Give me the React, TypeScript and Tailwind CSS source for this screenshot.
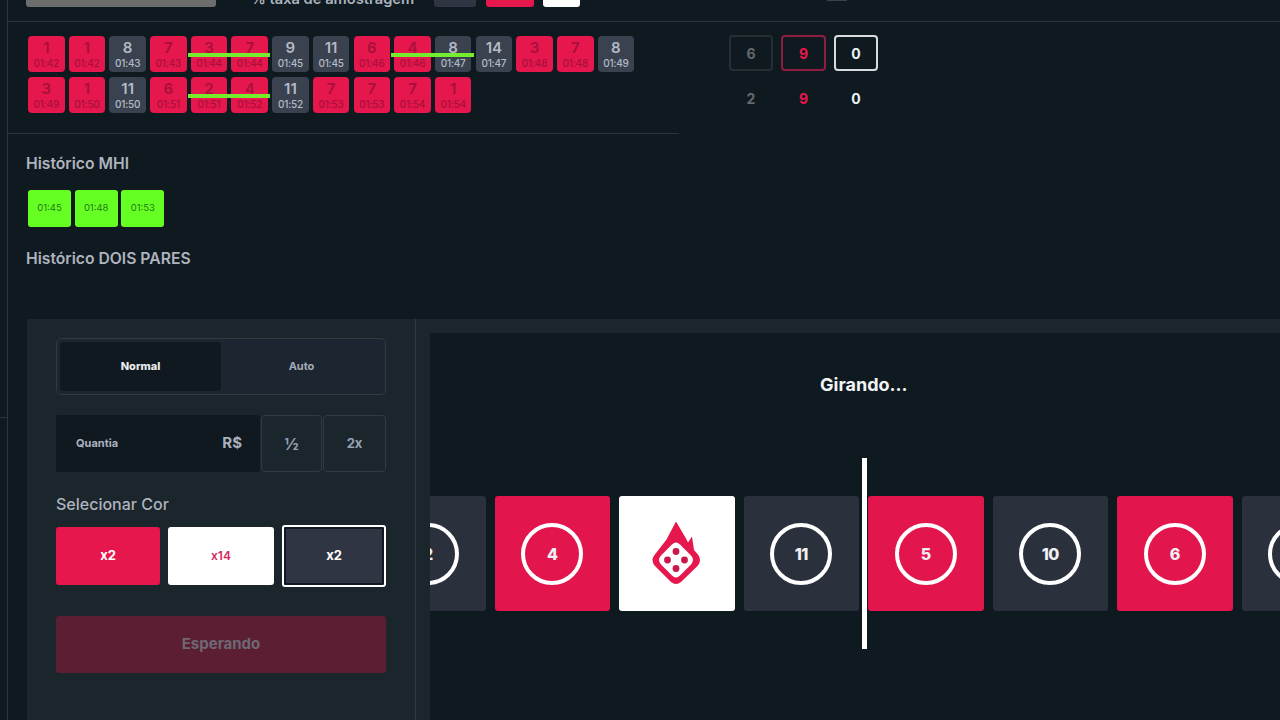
const font = "font-['Inter','Liberation_Sans',sans-serif]";

type Tile = { n: number; time: string; line?: 'start' | 'end' };

const rowOne: Tile[] = [
    { n: 1, time: '01:42' },
    { n: 1, time: '01:42' },
    { n: 8, time: '01:43' },
    { n: 7, time: '01:43' },
    { n: 3, time: '01:44', line: 'start' },
    { n: 7, time: '01:44', line: 'end' },
    { n: 9, time: '01:45' },
    { n: 11, time: '01:45' },
    { n: 6, time: '01:46' },
    { n: 4, time: '01:46', line: 'start' },
    { n: 8, time: '01:47', line: 'end' },
    { n: 14, time: '01:47' },
    { n: 3, time: '01:48' },
    { n: 7, time: '01:48' },
    { n: 8, time: '01:49' },
];

const rowTwo: Tile[] = [
    { n: 3, time: '01:49' },
    { n: 1, time: '01:50' },
    { n: 11, time: '01:50' },
    { n: 6, time: '01:51' },
    { n: 2, time: '01:51', line: 'start' },
    { n: 4, time: '01:52', line: 'end' },
    { n: 11, time: '01:52' },
    { n: 7, time: '01:53' },
    { n: 7, time: '01:53' },
    { n: 7, time: '01:54' },
    { n: 1, time: '01:54' },
];

const HistoryTile = ({ tile }: { tile: Tile }) => {
    const red = tile.n <= 7;
    return (
        <div
            className={`relative flex h-[36px] w-[36.6px] shrink-0 flex-col items-center rounded-[4px] pt-[4px] ${
                red ? 'bg-[#e5174c] text-[#a90f3c]' : 'bg-[#3a424f] text-[#b4bac6]'
            }`}
        >
            <span className="text-[15px] leading-[16px] font-semibold">{tile.n}</span>
            <span className="mt-[1px] text-[10px] leading-[12px] font-medium tracking-[-0.2px]">{tile.time}</span>
            {tile.line && (
                <div
                    className={`absolute top-[17px] -left-[3px] h-[4px] bg-[#74ee2c] ${
                        tile.line === 'start' ? 'w-[43px]' : 'w-[42px]'
                    }`}
                />
            )}
        </div>
    );
};

const DiceLogo = () => (
    <svg className="h-[115px] w-[115px]" viewBox="0 0 115 115">
        <path
            d="M57 25.5L67 42.5L69 46.5L73 40.5L75 54L79 58.5Q83 64 79 69.5L62 86Q57 90 52 86L35.5 69.5Q31.5 64 35.5 59L47.5 43.5Z"
            fill="#e5174c"
        />
        <path
            d="M53 48.5Q57 44.5 61 48.5L72 59.5Q76 64 72 68.5L61 79.5Q57 83.5 53 79.5L42 68.5Q38 64 42 59.5Z"
            fill="#ffffff"
        />
        <circle cx="57" cy="55.5" r="3.4" fill="#c8174b" />
        <circle cx="48.5" cy="64" r="3.4" fill="#c8174b" />
        <circle cx="65.5" cy="64" r="3.4" fill="#c8174b" />
        <circle cx="57" cy="72.5" r="3.4" fill="#c8174b" />
    </svg>
);

const SpinTile = ({ n, red, className = '' }: { n: number; red?: boolean; className?: string }) => (
    <div
        className={`flex h-[115px] w-[115.5px] shrink-0 items-center justify-center rounded-[3px] ${
            red ? 'bg-[#e2154d]' : 'bg-[#2a303c]'
        } ${className}`}
    >
        <div className="flex h-[62px] w-[62px] items-center justify-center rounded-full border-[4px] border-white text-[16px] font-extrabold tracking-[-0.5px] text-[#eef0f3]">
            {n}
        </div>
    </div>
);

const TopBar = () => (
    <div className="h-[22px] border-b border-[#2b353c]">
        <div className="flex h-[7px] items-end overflow-hidden">
            <div className="ml-[18px] h-[7px] w-[190px] rounded-b-[3px] bg-[#6d6d6d]" />
            <div className="ml-[35px] w-[183px] text-[14.7px] leading-[16px] font-semibold whitespace-nowrap text-[#aab2bd]">
                % taxa de amostragem
            </div>
            <div className="h-[7px] w-[42px] rounded-b-[3px] bg-[#2f3542]" />
            <div className="ml-[10px] h-[7px] w-[48px] rounded-b-[3px] bg-[#e5174c]" />
            <div className="ml-[9px] h-[7px] w-[37px] rounded-b-[3px] bg-white" />
            <div className="ml-[247px] h-[1px] w-[20px] self-start bg-[#3a434a]" />
        </div>
    </div>
);

const Counters = () => (
    <div className="ml-[50px] pt-[13px]">
        <div className="flex gap-[8px]">
            <div className="flex h-[36px] w-[44px] items-center justify-center rounded-[4px] border-2 border-[#262e34] text-[14px] font-bold text-[#66696c]">
                6
            </div>
            <div className="flex h-[36px] w-[45px] items-center justify-center rounded-[4px] border-2 border-[#8f1d40] text-[14px] font-bold text-[#e5174c]">
                9
            </div>
            <div className="flex h-[36px] w-[44px] items-center justify-center rounded-[4px] border-2 border-[#d8dcdf] text-[14px] font-bold text-[#eef1f3]">
                0
            </div>
        </div>
        <div className="mt-[18px] flex gap-[8px] text-[14px] leading-[20px] font-bold">
            <div className="w-[44px] text-center text-[#66696c]">2</div>
            <div className="w-[45px] text-center text-[#e5174c]">9</div>
            <div className="w-[44px] text-center text-[#eef1f3]">0</div>
        </div>
    </div>
);

const HistoryPanel = () => (
    <div className="w-[671px]">
        <div className="h-[112px] border-b border-[#2b353c] pt-[14px] pl-[20px]">
            <div className="flex gap-[4.1px]">
                {rowOne.map((tile, i) => (
                    <HistoryTile key={i} tile={tile} />
                ))}
            </div>
            <div className="mt-[5px] flex gap-[4.1px]">
                {rowTwo.map((tile, i) => (
                    <HistoryTile key={i} tile={tile} />
                ))}
            </div>
        </div>
        <div className="pl-[18px]">
            <h2 className="mt-[19px] text-[15.7px] leading-[22px] font-semibold text-[#aeb4be]">Histórico MHI</h2>
            <div className="mt-[15px] ml-[2px] flex gap-[3.7px]">
                {['01:45', '01:48', '01:53'].map((time) => (
                    <div
                        key={time}
                        className="flex h-[37px] w-[43px] items-center justify-center rounded-[3px] bg-[#66ff24] text-[9.5px] text-[#1f7a10]"
                    >
                        {time}
                    </div>
                ))}
            </div>
            <h2 className="mt-[21px] text-[15.7px] leading-[22px] font-semibold text-[#aeb4be]">Histórico DOIS PARES</h2>
        </div>
    </div>
);

const Controls = () => (
    <div className="w-[389px] shrink-0 border-r border-[#2f3a41] pt-[19px] pl-[29px]">
        <div className="flex h-[57px] w-[330px] rounded-[5px] border border-[#2f3a41] bg-[#1c2530] p-[3px]">
            <div className="flex w-[161px] items-center justify-center rounded-[4px] bg-[#101920] text-[11px] font-extrabold text-[#e8eaed]">
                Normal
            </div>
            <div className="flex flex-1 items-center justify-center text-[11px] font-bold text-[#a4abb8]">Auto</div>
        </div>
        <div className="mt-[20px] flex h-[57px] w-[330px]">
            <div className="flex w-[204px] items-center justify-between rounded-[3px] bg-[#101920] pr-[18px] pl-[20px] text-[#aab1bd]">
                <span className="text-[11px] font-bold">Quantia</span>
                <span className="text-[15px] font-bold">R$</span>
            </div>
            <div className="ml-[1px] flex w-[61px] items-center justify-center rounded-[4px] border border-[#2f3a41] text-[16px] font-bold text-[#97a0b3]">
                ½
            </div>
            <div className="ml-[1px] flex w-[63px] items-center justify-center rounded-[4px] border border-[#2f3a41] text-[13px] font-bold text-[#97a0b3]">
                2x
            </div>
        </div>
        <h2 className="mt-[21px] text-[16px] leading-[22px] font-medium text-[#aeb4be]">Selecionar Cor</h2>
        <div className="mt-[12px] flex h-[58px] w-[330px] items-center">
            <div className="flex h-[58px] w-[104px] items-center justify-center rounded-[3px] bg-[#e5174c] text-[13px] font-bold text-white">
                x2
            </div>
            <div className="ml-[8px] flex h-[58px] w-[106px] items-center justify-center rounded-[3px] bg-white text-[12px] font-semibold text-[#d4265a]">
                x14
            </div>
            <div className="ml-[8px] flex h-[62px] w-[104px] items-center justify-center rounded-[3px] border-2 border-white bg-[#2f3542] text-[13px] font-bold text-white shadow-[inset_0_0_0_2px_#101920]">
                x2
            </div>
        </div>
        <div className="mt-[31px] flex h-[57px] w-[330px] items-center justify-center rounded-[3px] bg-[#5b1e33] text-[15px] font-bold text-[#6f6873]">
            Esperando
        </div>
    </div>
);

const SpinBoard = () => (
    <div className="relative mt-[14px] ml-[14px] min-w-0 flex-1 overflow-hidden bg-[#0f1920]">
        <div className="pt-[41px] pl-[390px] text-[18px] leading-[22px] font-bold whitespace-nowrap text-[#f2f4f6]">
            Girando...
        </div>
        <div className="mt-[100px] flex gap-[9px]">
            <SpinTile n={2} className="-ml-[60px]" />
            <SpinTile n={4} red />
            <div className="flex h-[115px] w-[115.5px] shrink-0 items-center justify-center rounded-[3px] bg-white">
                <DiceLogo />
            </div>
            <SpinTile n={11} />
            <SpinTile n={5} red />
            <SpinTile n={10} />
            <SpinTile n={6} red />
            <SpinTile n={9} />
        </div>
        {/* ponteiro da roleta */}
        <div className="absolute top-[125px] left-[432px] h-[191px] w-[5px] bg-white" />
    </div>
);

const App = () => {
    return (
        <div className={`flex h-[720px] w-[1280px] overflow-hidden bg-[#0f1920] ${font}`}>
            <div className="w-[7px] shrink-0 pt-[417px]">
                <div className="border-t border-[#2b353c]" />
            </div>
            <div className="min-w-0 flex-1 border-l border-[#2b353c]">
                <div className="h-[319px]">
                    <TopBar />
                    <div className="flex">
                        <HistoryPanel />
                        <Counters />
                    </div>
                </div>
                <div className="ml-[19px] flex h-[401px] bg-[#1b252c]">
                    <Controls />
                    <SpinBoard />
                </div>
            </div>
        </div>
    );
};

export default App;
